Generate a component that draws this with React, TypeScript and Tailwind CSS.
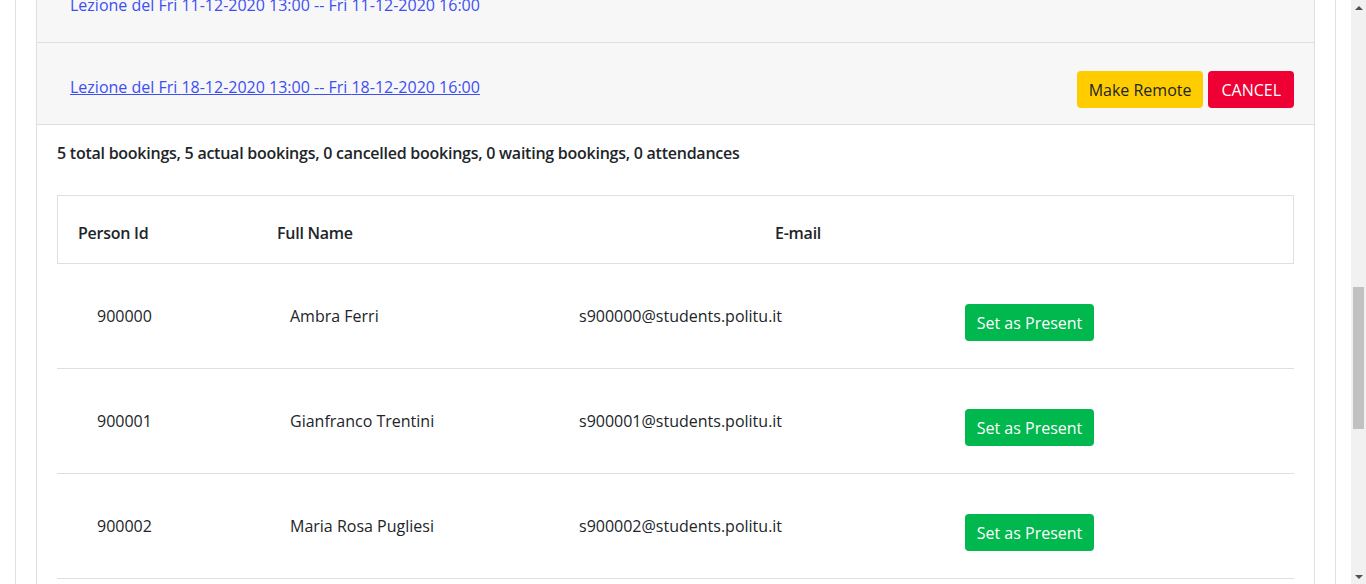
import React, { useLayoutEffect, useRef } from 'react';

interface Booking {
    id: number;
    name: string;
    email: string;
}

const pastLessons = [
    '25-09-2020', '02-10-2020', '09-10-2020', '16-10-2020', '23-10-2020', '30-10-2020',
    '06-11-2020', '13-11-2020', '20-11-2020', '27-11-2020', '04-12-2020', '11-12-2020',
];

const nextLessons = ['08-01-2021', '15-01-2021', '22-01-2021'];

const bookings: Booking[] = [
    { id: 900000, name: 'Ambra Ferri', email: 's900000@students.politu.it' },
    { id: 900001, name: 'Gianfranco Trentini', email: 's900001@students.politu.it' },
    { id: 900002, name: 'Maria Rosa Pugliesi', email: 's900002@students.politu.it' },
    { id: 900003, name: 'Luca Bianchi', email: 's900003@students.politu.it' },
    { id: 900004, name: 'Giulia Esposito', email: 's900004@students.politu.it' },
];

function LessonHeader({ date, active = false, buttons = false }: { date: string; active?: boolean; buttons?: boolean }) {
    return (
        <div className="flex min-h-[82px] items-start justify-between border-b border-[#dfdfdf] bg-[#f7f7f7] px-5 pt-[25px] pb-4">
            <a
                href="#"
                className={
                    'h-[38px] px-[13px] leading-[38px] text-[16px] font-medium text-[#3d4ff2] ' +
                    (active ? 'underline' : 'no-underline')
                }
            >
                Lezione del Fri {date} 13:00 -- Fri {date} 16:00
            </a>
            {buttons && (
                <div className="mt-[3px] flex gap-[5px]">
                    <button className="h-[37px] rounded-[4px] bg-[#ffcc00] px-3 text-[16px] text-[#212529]">Make Remote</button>
                    <button className="h-[37px] rounded-[4px] bg-[#ee0035] px-[13px] text-[16px] text-white">CANCEL</button>
                </div>
            )}
        </div>
    );
}

function Scrollbar() {
    return (
        <div className="flex w-[15px] shrink-0 flex-col bg-[#f1f1f1]">
            <div className="flex h-[15px] items-center justify-center">
                <div className="h-0 w-0 border-x-[4px] border-b-[4px] border-x-transparent border-b-[#505050]" />
            </div>
            <div className="mx-[2px] mt-[272px] h-[142px] bg-[#c1c1c1]" />
            <div className="flex-1" />
            <div className="flex h-[15px] items-center justify-center">
                <div className="h-0 w-0 border-x-[4px] border-t-[4px] border-x-transparent border-t-[#505050]" />
            </div>
        </div>
    );
}

export default function App() {
    const scrollRef = useRef<HTMLDivElement>(null);
    const currentRef = useRef<HTMLDivElement>(null);

    // la pagina è già scrollata sulla lezione aperta
    useLayoutEffect(() => {
        const box = scrollRef.current;
        const cur = currentRef.current;
        if (box && cur) {
            const offset = cur.getBoundingClientRect().top - box.getBoundingClientRect().top + box.scrollTop;
            box.scrollTop = offset - 43;
        }
    }, []);

    return (
        <div className="flex h-screen overflow-hidden bg-white font-['Open_Sans',sans-serif] text-[#212529]">
            <div ref={scrollRef} className="flex-1 overflow-hidden">
                <div className="mx-[15px] min-h-screen border-x border-[#dfdfdf] px-5 pb-10">
                    <div className="py-[60px]">
                        <h1 className="text-[28px] font-medium">Le tue lezioni</h1>
                        <p className="mt-2 text-[16px]">Analisi Matematica I</p>
                    </div>
                    <div className="border border-[#dfdfdf]">
                        {pastLessons.map((d) => (
                            <LessonHeader key={d} date={d} />
                        ))}
                        <div ref={currentRef}>
                            <LessonHeader date="18-12-2020" active buttons />
                        </div>
                        <div className="border-b border-[#dfdfdf] px-5 pt-4 pb-5">
                            <p className="text-[16px] leading-6 font-semibold tracking-[-0.25px]">
                                5 total bookings, 5 actual bookings, 0 cancelled bookings, 0 waiting bookings, 0 attendances
                            </p>
                            <div className="mt-[30px]">
                                <div className="flex border border-[#dfdfdf] pt-[25px] pb-[18px] pl-5 text-[16px] leading-6 font-semibold tracking-[-0.25px]">
                                    <div className="w-[199px]">Person Id</div>
                                    <div className="w-[498px]">Full Name</div>
                                    <div>E-mail</div>
                                </div>
                                {bookings.map((b) => (
                                    <div key={b.id} className="flex items-start border-b border-[#dfdfdf] pt-10 pb-[27px] text-[16px] leading-6">
                                        <div className="w-[233px] pl-10">{b.id}</div>
                                        <div className="w-[289px]">{b.name}</div>
                                        <div className="w-[386px]">{b.email}</div>
                                        <button className="h-[37px] w-[129px] rounded-[4px] bg-[#00b84d] text-white">Set as Present</button>
                                    </div>
                                ))}
                            </div>
                        </div>
                        {nextLessons.map((d) => (
                            <LessonHeader key={d} date={d} buttons />
                        ))}
                    </div>
                </div>
            </div>
            <Scrollbar />
        </div>
    );
}
